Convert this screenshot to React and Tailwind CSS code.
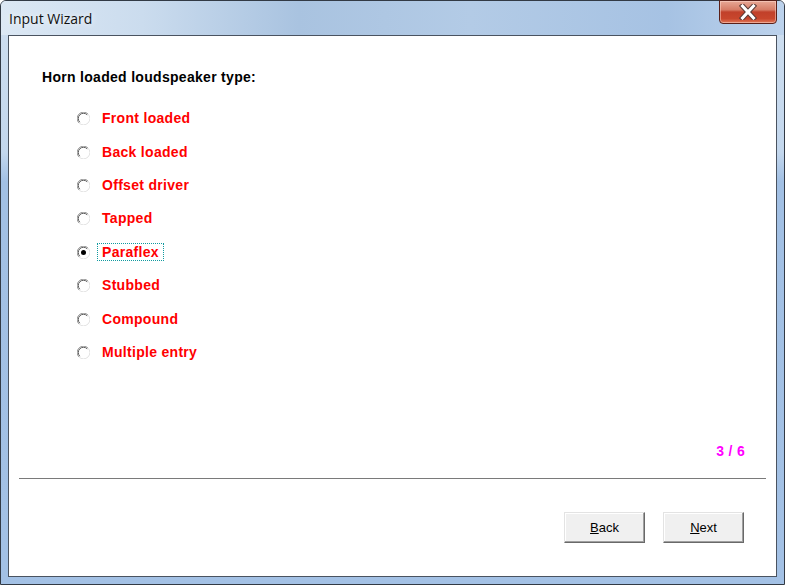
import React from "react";

const options = [
  "Front loaded",
  "Back loaded",
  "Offset driver",
  "Tapped",
  "Paraflex",
  "Stubbed",
  "Compound",
  "Multiple entry",
];

function Radio({ checked }) {
  return (
    <svg width="13" height="13" viewBox="0 0 13 13" className="shrink-0">
      <circle cx="6.5" cy="6.5" r="6" fill="#ffffff" />
      <path d="M11 2 A6 6 0 0 0 2 11" fill="none" stroke="#9a9a9a" strokeWidth="1" />
      <path d="M10.2 2.8 A5 5 0 0 0 2.8 10.2" fill="none" stroke="#5a5a5a" strokeWidth="1" />
      <path d="M2 11 A6 6 0 0 0 11 2" fill="none" stroke="#e3e3e3" strokeWidth="1" />
      {checked && <circle cx="6.5" cy="6.5" r="2.5" fill="#000000" />}
    </svg>
  );
}

function Button({ children }) {
  return (
    <button className="w-[81px] h-[31px] bg-[#f0f0f0] border border-t-[#e3e3e3] border-l-[#e3e3e3] border-b-[#696969] border-r-[#696969] shadow-[inset_-1px_-1px_0_#a0a0a0,inset_1px_1px_0_#ffffff] text-[13px] text-black font-['Liberation_Sans',sans-serif] leading-none flex items-center justify-center">
      {children}
    </button>
  );
}

export default function App() {
  return (
    <div className="w-[785px] h-[585px] overflow-hidden">
      <div className="w-[785px] h-[585px] border border-[#323a45] rounded-t-[6px] flex flex-col bg-[linear-gradient(to_bottom,#cfdff0_0%,#c3d7ed_26%,#a2c0e4_31%,#a3c1e5_100%)]">
        <div className="h-[34px] flex items-start justify-between bg-[linear-gradient(to_right,#dce8f4_0%,#cbdcee_18%,#a9c3e0_38%,#b3cbe6_60%,#a6c2e3_85%,#bcd2ec_100%)] rounded-t-[5px]">
          <div className="pl-[8px] pt-[8px] text-[14px] leading-[20px] text-[#111111] font-['Open_Sans',sans-serif] [text-shadow:0_0_6px_#ffffff]">
            Input Wizard
          </div>
          <div className="mr-[7px] w-[58px] h-[24px] -mt-px rounded-b-[4px] border border-[#5a1f18] bg-[linear-gradient(to_bottom,#e8a896_0%,#d67c66_40%,#c1402a_50%,#c8462c_80%,#e0785a_100%)] shadow-[inset_0_0_0_1px_rgba(255,220,210,0.5)] flex items-center justify-center">
            <svg width="18" height="16" viewBox="0 0 18 16">
              <path d="M3.5 2 L14.5 14 M14.5 2 L3.5 14" stroke="#5a3a36" strokeWidth="5" strokeLinecap="square" />
              <path d="M3.5 2 L14.5 14 M14.5 2 L3.5 14" stroke="#ffffff" strokeWidth="3" strokeLinecap="square" />
            </svg>
          </div>
        </div>
        <div className="mx-[7px] h-[542px] border border-[#4a5360] bg-white flex flex-col font-['Liberation_Sans',sans-serif]">
          <div className="pl-[33px] pt-[33px] h-[49px] text-[14px] leading-[16px] font-bold tracking-[0.3px] text-black">
            Horn loaded loudspeaker type:
          </div>
          <div className="mt-[17px] pl-[68px] flex flex-col">
            {options.map((o, i) => (
              <div key={o} className="h-[33.4px] flex items-center">
                <Radio checked={i === 4} />
                <span
                  className={
                    i === 4
                      ? "ml-[7px] pl-[4px] pr-[4px] h-[18px] flex items-center border border-dotted border-[#119aa0] text-[14px] font-bold tracking-[0.3px] text-[#ff0000]"
                      : "ml-[12px] text-[14px] font-bold tracking-[0.3px] text-[#ff0000]"
                  }
                >
                  {o}
                </span>
              </div>
            ))}
          </div>
          <div className="mt-[74px] h-[16px] leading-[16px] pr-[31px] text-right text-[14px] font-bold tracking-[0.3px] text-[#ff00ff]">
            3 / 6
          </div>
          <div className="mt-[19px] mx-[10px] h-px bg-[#7a7a7a]" />
          <div className="mt-[33px] pr-[32px] flex justify-end gap-[18px]">
            <Button>
              <span><span className="underline">B</span>ack</span>
            </Button>
            <Button>
              <span><span className="underline">N</span>ext</span>
            </Button>
          </div>
        </div>
      </div>
    </div>
  );
}
